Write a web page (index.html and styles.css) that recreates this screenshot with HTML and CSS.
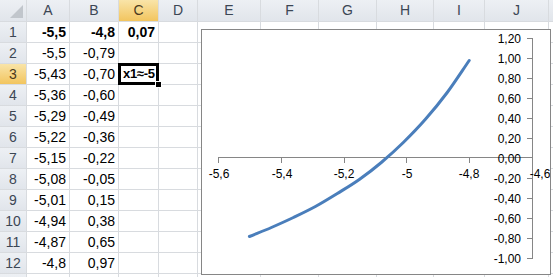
FILE: index.html
```
<!DOCTYPE html>
<html lang="ru">
<head>
  <meta charset="UTF-8" />
  <title>Sheet1</title>
  <link rel="stylesheet" href="styles.css">
</head>
<body>
  <div class="wrap">
    <div class="sheet">
      <!-- column headers -->
      <div class="hd corner"><span class="tri"></span></div>
      <div class="hd">A</div><div class="hd">B</div><div class="hd sel">C</div><div class="hd">D</div><div class="hd">E</div><div class="hd">F</div><div class="hd">G</div><div class="hd">H</div><div class="hd">I</div><div class="hd">J</div><div class="hd"></div>

      <div class="rh">1</div><div class="c num b">-5,5</div><div class="c num b">-4,8</div><div class="c num b">0,07</div><div class="c"></div><div class="c"></div><div class="c"></div><div class="c"></div><div class="c"></div><div class="c"></div><div class="c"></div><div class="c"></div>
      <div class="rh">2</div><div class="c num">-5,5</div><div class="c num">-0,79</div><div class="c"></div><div class="c"></div><div class="c"></div><div class="c"></div><div class="c"></div><div class="c"></div><div class="c"></div><div class="c"></div><div class="c"></div>
      <div class="rh sel">3</div><div class="c num">-5,43</div><div class="c num">-0,70</div><div class="c b active">x1≈-5<span class="handle"></span></div><div class="c"></div><div class="c"></div><div class="c"></div><div class="c"></div><div class="c"></div><div class="c"></div><div class="c"></div><div class="c"></div>
      <div class="rh">4</div><div class="c num">-5,36</div><div class="c num">-0,60</div><div class="c"></div><div class="c"></div><div class="c"></div><div class="c"></div><div class="c"></div><div class="c"></div><div class="c"></div><div class="c"></div><div class="c"></div>
      <div class="rh">5</div><div class="c num">-5,29</div><div class="c num">-0,49</div><div class="c"></div><div class="c"></div><div class="c"></div><div class="c"></div><div class="c"></div><div class="c"></div><div class="c"></div><div class="c"></div><div class="c"></div>
      <div class="rh">6</div><div class="c num">-5,22</div><div class="c num">-0,36</div><div class="c"></div><div class="c"></div><div class="c"></div><div class="c"></div><div class="c"></div><div class="c"></div><div class="c"></div><div class="c"></div><div class="c"></div>
      <div class="rh">7</div><div class="c num">-5,15</div><div class="c num">-0,22</div><div class="c"></div><div class="c"></div><div class="c"></div><div class="c"></div><div class="c"></div><div class="c"></div><div class="c"></div><div class="c"></div><div class="c"></div>
      <div class="rh">8</div><div class="c num">-5,08</div><div class="c num">-0,05</div><div class="c"></div><div class="c"></div><div class="c"></div><div class="c"></div><div class="c"></div><div class="c"></div><div class="c"></div><div class="c"></div><div class="c"></div>
      <div class="rh">9</div><div class="c num">-5,01</div><div class="c num">0,15</div><div class="c"></div><div class="c"></div><div class="c"></div><div class="c"></div><div class="c"></div><div class="c"></div><div class="c"></div><div class="c"></div><div class="c"></div>
      <div class="rh">10</div><div class="c num">-4,94</div><div class="c num">0,38</div><div class="c"></div><div class="c"></div><div class="c"></div><div class="c"></div><div class="c"></div><div class="c"></div><div class="c"></div><div class="c"></div><div class="c"></div>
      <div class="rh">11</div><div class="c num">-4,87</div><div class="c num">0,65</div><div class="c"></div><div class="c"></div><div class="c"></div><div class="c"></div><div class="c"></div><div class="c"></div><div class="c"></div><div class="c"></div><div class="c"></div>
      <div class="rh">12</div><div class="c num">-4,8</div><div class="c num">0,97</div><div class="c"></div><div class="c"></div><div class="c"></div><div class="c"></div><div class="c"></div><div class="c"></div><div class="c"></div><div class="c"></div><div class="c"></div>
      <div class="rh"></div><div class="c"></div><div class="c"></div><div class="c"></div><div class="c"></div><div class="c"></div><div class="c"></div><div class="c"></div><div class="c"></div><div class="c"></div><div class="c"></div><div class="c"></div>
    </div>

    <!-- embedded chart -->
    <div class="chart">
      <svg width="348" height="244" viewBox="0 0 348 244">
        <g transform="translate(-202,-30)">
          <!-- y axis -->
          <g class="axis">
            <line x1="532.5" y1="38" x2="532.5" y2="258" />
            <line x1="527" y1="38.5" x2="533" y2="38.5" />
            <line x1="527" y1="58.5" x2="533" y2="58.5" />
            <line x1="527" y1="78.5" x2="533" y2="78.5" />
            <line x1="527" y1="98.5" x2="533" y2="98.5" />
            <line x1="527" y1="118.5" x2="533" y2="118.5" />
            <line x1="527" y1="138.5" x2="533" y2="138.5" />
            <line x1="527" y1="178.5" x2="533" y2="178.5" />
            <line x1="527" y1="198.5" x2="533" y2="198.5" />
            <line x1="527" y1="218.5" x2="533" y2="218.5" />
            <line x1="527" y1="238.5" x2="533" y2="238.5" />
            <line x1="527" y1="258.5" x2="533" y2="258.5" />
            <!-- x axis -->
            <line x1="218" y1="157.5" x2="533" y2="157.5" />
            <line x1="218.5" y1="157" x2="218.5" y2="163" />
            <line x1="281.5" y1="157" x2="281.5" y2="163" />
            <line x1="344.5" y1="157" x2="344.5" y2="163" />
            <line x1="406.5" y1="157" x2="406.5" y2="163" />
            <line x1="469.5" y1="157" x2="469.5" y2="163" />
          </g>
          <g class="ylab">
            <text x="521" y="43">1,20</text>
            <text x="521" y="63">1,00</text>
            <text x="521" y="83">0,80</text>
            <text x="521" y="103">0,60</text>
            <text x="521" y="123">0,40</text>
            <text x="521" y="143">0,20</text>
            <text x="521" y="163">0,00</text>
            <text x="521" y="183">-0,20</text>
            <text x="521" y="203">-0,40</text>
            <text x="521" y="223">-0,60</text>
            <text x="521" y="243">-0,80</text>
            <text x="521" y="263">-1,00</text>
          </g>
          <g class="xlab">
            <text x="219" y="178">-5,6</text>
            <text x="282" y="178">-5,4</text>
            <text x="344" y="178">-5,2</text>
            <text x="407" y="178">-5</text>
            <text x="469" y="178">-4,8</text>
            <text x="540" y="178">-4,6</text>
          </g>
          <path class="series" d="M249.4,236.5 C256.7,233.5 264.1,230.7 271.4,227.5 C278.7,224.3 286.1,221 293.4,217.5 C300.7,214 308.1,210.5 315.4,206.5 C322.7,202.5 330,198 337.3,193.5 C344.6,189 352,184.7 359.3,179.5 C366.6,174.3 374,168.7 381.3,162.5 C388.6,156.3 396,149.7 403.3,142.5 C410.6,135.3 417.9,127.8 425.2,119.5 C432.5,111.2 439.9,102.3 447.2,92.5 C454.5,82.7 461.9,71.2 469.2,60.5" />
        </g>
      </svg>
    </div>
  </div>
</body>
</html>
```

FILE: styles.css
```
html, body {
  margin: 0;
  padding: 0;
  background: #fff;
  overflow: hidden;
}

.wrap {
  position: relative;
  width: 553px;
  height: 277px;
  overflow: hidden;
  font-family: 'Liberation Sans', Arial, sans-serif;
  font-size: 14px;
  color: #000;
}

.sheet {
  display: grid;
  grid-template-columns: 26px 42px 48px 39px 38px 62px 57px 57px 56px 50px 63px 10px;
  grid-template-rows: 21px;
  grid-auto-rows: 20px;
  gap: 1px;
  background: #d8dbdf;
}

.c {
  background: #fff;
  line-height: 20px;
  padding: 0 3px;
  white-space: nowrap;
  overflow: visible;
}

.num {
  text-align: right;
}

.b {
  font-weight: bold;
}

.hd, .rh {
  background: linear-gradient(#edf0f4, #e1e5eb);
  color: #3c4654;
  text-align: center;
  line-height: 20px;
}

.hd {
  line-height: 21px;
}

.hd.sel, .rh.sel {
  background: linear-gradient(#f9e4a8, #f2c55f);
  color: #4a3a20;
}

.corner {
  position: relative;
}

.tri {
  position: absolute;
  right: 3px;
  bottom: 3px;
  width: 0;
  height: 0;
  border-left: 13px solid transparent;
  border-bottom: 13px solid #c1c6cc;
}

.active {
  position: relative;
  box-shadow: 0 0 0 1px #000, inset 0 0 0 2px #000;
  padding-left: 4px;
  font-size: 13px;
  letter-spacing: -0.3px;
  z-index: 1;
}

.handle {
  position: absolute;
  right: -4px;
  bottom: -4px;
  width: 5px;
  height: 5px;
  background: #000;
  border: 1px solid #fff;
}

.chart {
  position: absolute;
  left: 201px;
  top: 29px;
  width: 350px;
  height: 246px;
  box-sizing: border-box;
  border: 1px solid #868686;
  background: #fff;
  z-index: 2;
}

.chart svg {
  display: block;
}

.axis line {
  stroke: #868686;
  stroke-width: 1;
}

.ylab text, .xlab text {
  font-family: 'Liberation Sans', Arial, sans-serif;
  font-size: 12px;
  fill: #000;
}

.ylab text {
  text-anchor: end;
}

.xlab text {
  text-anchor: middle;
}

.series {
  fill: none;
  stroke: #4a7ebb;
  stroke-width: 3;
  stroke-linecap: round;
  stroke-linejoin: round;
}
```
